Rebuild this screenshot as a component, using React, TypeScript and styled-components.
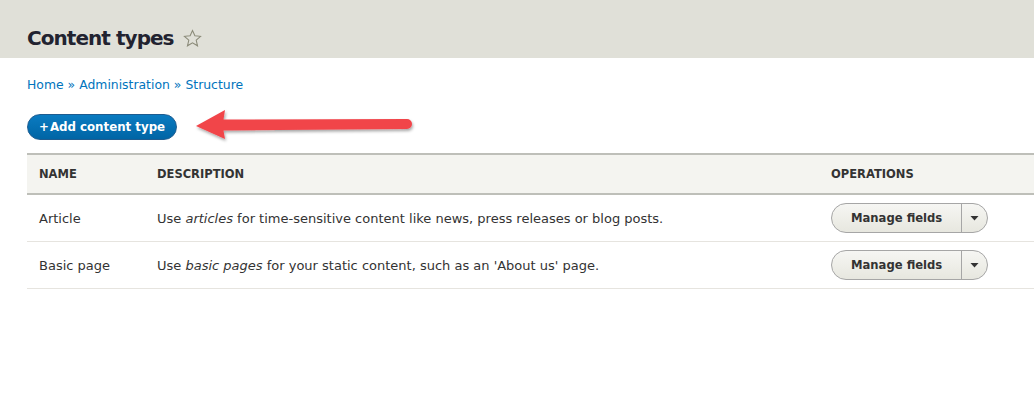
import React from 'react';
import styled, { createGlobalStyle } from 'styled-components';

const GlobalStyle = createGlobalStyle`
  html, body {
    margin: 0;
    padding: 0;
    background: #fff;
  }
  body {
    font-family: "DejaVu Sans", Verdana, sans-serif;
    color: #333;
  }
`;

const Page = styled.div`
  width: 1034px;
  min-height: 393px;
  overflow: hidden;
`;

const Header = styled.header`
  height: 58px;
  background: #e0e0d8;
  display: flex;
  align-items: flex-end;
  padding: 0 27px;
  box-sizing: border-box;
`;

const Title = styled.h1`
  margin: 0 0 8px;
  font-size: 20px;
  letter-spacing: -0.95px;
  font-weight: bold;
  color: #222330;
  display: flex;
  align-items: center;
  gap: 9px;
`;

const Content = styled.main`
  padding: 19px 0 0 27px;
`;

const Breadcrumb = styled.nav`
  font-size: 12.4px;
  color: #0074bd;
  display: flex;
  gap: 4px;
`;

const Crumb = styled.a`
  color: #0074bd;
  text-decoration: none;
`;

const Sep = styled.span`
  color: #0074bd;
`;

const ActionRow = styled.div`
  display: flex;
  align-items: center;
  margin-top: 15px;
  gap: 16px;
`;

const PrimaryButton = styled.a`
  display: inline-flex;
  align-items: center;
  height: 26px;
  padding: 0 11px 0 11px;
  border-radius: 13px;
  background: linear-gradient(#0a7bc1, #0065a5);
  border: 1px solid #1e5c90;
  box-sizing: border-box;
  color: #fff;
  font-size: 11.8px;
  font-weight: bold;
  text-decoration: none;
  gap: 1px;
`;

const Table = styled.table`
  margin-top: 6px;
  width: 1007px;
  table-layout: fixed;
  border-collapse: collapse;
  font-size: 13px;
`;

const Col = styled.col<{ $w?: number }>`
  width: ${({ $w }) => ($w ? `${$w}px` : 'auto')};
`;

const HeadRow = styled.tr`
  background: #f4f4f0;
  border-top: 2px solid #bebfb9;
  border-bottom: 2px solid #bebfb9;
`;

const Th = styled.th`
  text-align: left;
  font-size: 11.5px;
  font-weight: bold;
  text-transform: uppercase;
  color: #333;
  height: 38px;
  padding: 0 12px;
`;

const Row = styled.tr`
  border-bottom: 1px solid #e6e4df;
`;

const Td = styled.td`
  height: 46px;
  padding: 0 12px;
  color: #333;
  white-space: nowrap;
`;

const Dropbutton = styled.div`
  display: inline-flex;
  height: 30px;
  border: 1px solid #a6a6a6;
  border-radius: 15px;
  background: linear-gradient(#f6f6f3, #e7e7df);
  box-sizing: border-box;
  overflow: hidden;
`;

const DropMain = styled.a`
  display: flex;
  align-items: center;
  padding: 0 19px 0 19px;
  font-weight: bold;
  font-size: 11.6px;
  color: #333;
  text-decoration: none;
`;

const DropToggle = styled.span`
  display: flex;
  align-items: center;
  justify-content: center;
  width: 25px;
  border-left: 1px solid #a6a6a6;
`;

const Star = () => (
  <svg width="19" height="19" viewBox="0 0 20 20">
    <path
      d="M10 1.5l2.5 5.6 6 .6-4.6 4 1.4 6-5.3-3.2-5.3 3.2 1.4-6-4.6-4 6-.6z"
      fill="none"
      stroke="#8a8a78"
      strokeWidth="1.1"
    />
  </svg>
);

const Arrow = () => (
  <svg width="224" height="40" viewBox="0 0 224 40">
    <defs>
      <filter id="sh" x="-10%" y="-30%" width="120%" height="170%">
        <feDropShadow dx="1" dy="2" stdDeviation="1.6" floodColor="#000" floodOpacity="0.35" />
      </filter>
    </defs>
    <path
      filter="url(#sh)"
      d="M3 19 L32 3 L30.5 12.5 L214 12 A5 5 0 0 1 214 22 L30.5 23.5 L32 32 Z"
      fill="#f1444a"
    />
  </svg>
);

const Caret = () => (
  <svg width="9" height="5" viewBox="0 0 9 5">
    <path d="M0.5 0h8L4.5 4.5z" fill="#333" />
  </svg>
);

const types = [
  { name: 'Article', em: 'articles', rest: ' for time-sensitive content like news, press releases or blog posts.' },
  { name: 'Basic page', em: 'basic pages', rest: " for your static content, such as an 'About us' page." },
];

const App = () => {
  return (
    <Page>
      <GlobalStyle />
      <Header>
        <Title>
          Content types <Star />
        </Title>
      </Header>
      <Content>
        <Breadcrumb>
          <Crumb href="#">Home</Crumb>
          <Sep>»</Sep>
          <Crumb href="#">Administration</Crumb>
          <Sep>»</Sep>
          <Crumb href="#">Structure</Crumb>
        </Breadcrumb>
        <ActionRow>
          <PrimaryButton href="#">
            <span>+</span>
            <span>Add content type</span>
          </PrimaryButton>
          <Arrow />
        </ActionRow>
        <Table>
          <colgroup>
            <Col $w={118} />
            <Col $w={674} />
            <Col />
          </colgroup>
          <thead>
            <HeadRow>
              <Th>Name</Th>
              <Th>Description</Th>
              <Th>Operations</Th>
            </HeadRow>
          </thead>
          <tbody>
            {types.map((t) => (
              <Row key={t.name}>
                <Td>{t.name}</Td>
                <Td>
                  Use <em>{t.em}</em>
                  {t.rest}
                </Td>
                <Td>
                  <Dropbutton>
                    <DropMain href="#">Manage fields</DropMain>
                    <DropToggle>
                      <Caret />
                    </DropToggle>
                  </Dropbutton>
                </Td>
              </Row>
            ))}
          </tbody>
        </Table>
      </Content>
    </Page>
  );
};

export default App;
